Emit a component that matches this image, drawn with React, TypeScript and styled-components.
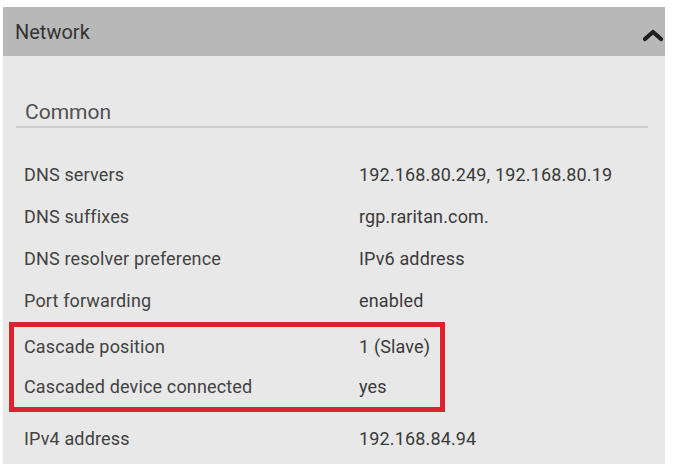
import React from "react";
import styled, { createGlobalStyle } from "styled-components";

const Global = createGlobalStyle`
  html, body { margin: 0; padding: 0; background: #ffffff; }
  body { font-family: Roboto, "Liberation Sans", Arial, sans-serif; }
`;

const Panel = styled.section`
  margin: 7px 8px 4px 3px;
  width: 662px;
  height: 457px;
  background: #e8e8e8;
  display: flex;
  flex-direction: column;
  overflow: hidden;
`;

const Header = styled.header`
  height: 49px;
  flex: none;
  box-sizing: border-box;
  background: #b8b8b8;
  display: flex;
  align-items: center;
  justify-content: space-between;
  padding: 0 1px 0 12px;
  color: #333;
  font-size: 20px;
`;

const ChevronIcon = styled.svg`
  margin-top: 6px;
`;

const Body = styled.div`
  padding: 44px 17px 0 13px;
  display: flex;
  flex-direction: column;
`;

const SectionTitle = styled.h2`
  margin: 0;
  font-weight: 400;
  font-size: 21px;
  color: #505050;
  padding: 0 0 2px 9px;
  border-bottom: 2px solid #cdcdcd;
  line-height: 24px;
`;

const Rows = styled.div`
  margin-top: 25px;
  display: flex;
  flex-direction: column;
`;

const Row = styled.div<{ $h?: number }>`
  display: grid;
  grid-template-columns: 335px 1fr;
  align-items: center;
  height: ${(p) => p.$h ?? 42}px;
  padding-left: 8px;
  font-size: 18px;
  letter-spacing: 0.15px;
  color: #424242;
`;

const Value = styled.span`
  color: #3a3a3a;
`;

const Highlight = styled.div`
  margin: 1px 0 0 -7px;
  width: 436px;
  box-sizing: border-box;
  border: 5px solid #d9232d;
  display: flex;
  flex-direction: column;
  padding-left: 2px;
`;

const Chevron = () => (
  <ChevronIcon width="22" height="14" viewBox="0 0 22 14" aria-hidden>
    <path d="M3 11 L11 4 L19 11" fill="none" stroke="#1e1e1e" strokeWidth="4.2" strokeLinecap="round" strokeLinejoin="round" />
  </ChevronIcon>
);

const data: [string, string][] = [
  ["DNS servers", "192.168.80.249, 192.168.80.19"],
  ["DNS suffixes", "rgp.raritan.com."],
  ["DNS resolver preference", "IPv6 address"],
  ["Port forwarding", "enabled"],
];

export default function App() {
  return (
    <>
      <Global />
      <Panel>
        <Header>
          <span>Network</span>
          <Chevron />
        </Header>
        <Body>
          <SectionTitle>Common</SectionTitle>
          <Rows>
            {data.map(([k, v]) => (
              <Row key={k}>
                <span>{k}</span>
                <Value>{v}</Value>
              </Row>
            ))}
            <Highlight>
              <Row $h={38}>
                <span>Cascade position</span>
                <Value>1 (Slave)</Value>
              </Row>
              <Row $h={42}>
                <span>Cascaded device connected</span>
                <Value>yes</Value>
              </Row>
            </Highlight>
            <Row $h={52}>
              <span>IPv4 address</span>
              <Value>192.168.84.94</Value>
            </Row>
          </Rows>
        </Body>
      </Panel>
    </>
  );
}
